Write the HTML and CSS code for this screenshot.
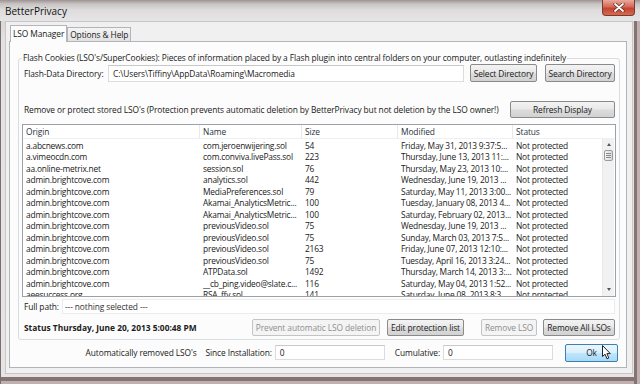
FILE: index.html
```html
<!DOCTYPE html>
<html lang="en">
<head>
  <meta charset="utf-8">
  <title>BetterPrivacy</title>
  <link rel="stylesheet" href="styles.css">
</head>
<body>
<div class="window">
  <div class="titlebar">
    <span class="title">BetterPrivacy</span>
    <div class="close-btn">
      <svg width="12" height="9" viewBox="0 0 12 9">
        <path d="M2 1 L10 8 M10 1 L2 8" stroke="#5a2a22" stroke-width="3.2" stroke-linecap="round"/>
        <path d="M2 1 L10 8 M10 1 L2 8" stroke="#ffffff" stroke-width="1.8" stroke-linecap="round"/>
      </svg>
    </div>
  </div>

  <div class="client">
    <div class="tabs">
      <div class="tab active">LSO Manager</div>
      <div class="tab">Options &amp; Help</div>
    </div>

    <div class="panel">
      <fieldset class="group">
        <legend>Flash Cookies (LSO's/SuperCookies): Pieces of information placed by a Flash plugin into central folders on your computer, outlasting indefinitely</legend>

        <div class="dir-row">
          <span class="label grow">Flash-Data Directory:</span>
          <div class="textbox dir-box">C:\Users\Tiffiny\AppData\Roaming\Macromedia</div>
          <button class="btn select-btn">Select Directory</button>
          <button class="btn search-btn">Search Directory</button>
        </div>

        <div class="info-row">
          <span class="label grow">Remove or protect stored LSO's (Protection prevents automatic deletion by BetterPrivacy but not deletion by the LSO owner!)</span>
          <button class="btn refresh-btn">Refresh Display</button>
        </div>

        <div class="listview">
          <div class="lv-header">
            <div class="hcell">Origin</div>
            <div class="hcell">Name</div>
            <div class="hcell">Size</div>
            <div class="hcell">Modified</div>
            <div class="hcell">Status</div>
          </div>
          <div class="lv-body">
            <div class="lv-rows">
              <div class="row"><span>a.abcnews.com</span><span>com.jeroenwijering.sol</span><span>54</span><span>Friday, May 31, 2013 9:37:5...</span><span>Not protected</span></div>
              <div class="row"><span>a.vimeocdn.com</span><span>com.conviva.livePass.sol</span><span>223</span><span>Thursday, June 13, 2013 11:...</span><span>Not protected</span></div>
              <div class="row"><span>aa.online-metrix.net</span><span>session.sol</span><span>76</span><span>Thursday, May 23, 2013 10:...</span><span>Not protected</span></div>
              <div class="row"><span>admin.brightcove.com</span><span>analytics.sol</span><span>442</span><span>Wednesday, June 19, 2013 ...</span><span>Not protected</span></div>
              <div class="row"><span>admin.brightcove.com</span><span>MediaPreferences.sol</span><span>79</span><span>Saturday, May 11, 2013 3:00...</span><span>Not protected</span></div>
              <div class="row"><span>admin.brightcove.com</span><span>Akamai_AnalyticsMetric...</span><span>100</span><span>Tuesday, January 08, 2013 4...</span><span>Not protected</span></div>
              <div class="row"><span>admin.brightcove.com</span><span>Akamai_AnalyticsMetric...</span><span>100</span><span>Saturday, February 02, 2013...</span><span>Not protected</span></div>
              <div class="row"><span>admin.brightcove.com</span><span>previousVideo.sol</span><span>75</span><span>Wednesday, June 19, 2013 ...</span><span>Not protected</span></div>
              <div class="row"><span>admin.brightcove.com</span><span>previousVideo.sol</span><span>75</span><span>Sunday, March 03, 2013 7:5...</span><span>Not protected</span></div>
              <div class="row"><span>admin.brightcove.com</span><span>previousVideo.sol</span><span>2163</span><span>Friday, June 07, 2013 12:10:...</span><span>Not protected</span></div>
              <div class="row"><span>admin.brightcove.com</span><span>previousVideo.sol</span><span>75</span><span>Tuesday, April 16, 2013 3:24...</span><span>Not protected</span></div>
              <div class="row"><span>admin.brightcove.com</span><span>ATPData.sol</span><span>1492</span><span>Thursday, March 14, 2013 3:...</span><span>Not protected</span></div>
              <div class="row"><span>admin.brightcove.com</span><span>__cb_ping.video@slate.c...</span><span>116</span><span>Saturday, May 04, 2013 1:52...</span><span>Not protected</span></div>
              <div class="row"><span>aeesuccess.org</span><span>RSA_ffy.sol</span><span>141</span><span>Saturday, June 08, 2013 8:3...</span><span>Not protected</span></div>
            </div>
            <div class="scrollbar">
              <div class="arrow up"></div>
              <div class="thumb"><i></i><i></i><i></i></div>
              <div class="track"></div>
              <div class="arrow down"></div>
            </div>
          </div>
        </div>

        <div class="path-row">
          <span class="label">Full path:</span>
          <div class="textbox path-box">--- nothing selected ---</div>
        </div>

        <div class="status-row">
          <span class="label grow status-text">Status Thursday, June 20, 2013 5:00:48 PM</span>
          <button class="btn prevent-btn" disabled>Prevent automatic LSO deletion</button>
          <button class="btn edit-btn">Edit protection list</button>
          <button class="btn remove-btn" disabled>Remove LSO</button>
          <button class="btn remove-all-btn">Remove All LSOs</button>
        </div>
      </fieldset>

      <div class="totals-row">
        <span class="label auto-label">Automatically removed LSO's</span>
        <span class="label">Since Installation:</span>
        <div class="textbox count-box">0</div>
        <span class="label cumul-label">Cumulative:</span>
        <div class="textbox count-box">0</div>
        <button class="btn ok-btn">Ok</button>
      </div>
    </div>
  </div>

  <svg class="cursor" width="10" height="15" viewBox="0 0 10 15">
    <path d="M0.5 0.5 L0.5 11.5 L3 9.2 L5 13.8 L6.8 13 L4.9 8.6 L8.3 8.6 Z" fill="#ffffff" stroke="#222" stroke-width="1" stroke-linejoin="round"/>
  </svg>
</div>
</body>
</html>
```

FILE: styles.css
```css
body {
  margin: 0;
  background: #b9a9a9;
  font-family: "Open Sans", "Noto Sans", sans-serif;
  font-size: 8.4px;
  letter-spacing: -0.1px;
  color: #202020;
}

.window {
  position: relative;
  width: 640px;
  height: 384px;
  background: linear-gradient(#d2cccc, #e3e1e1 40px, #e6e4e4);
  box-shadow: inset 1px 0 #7b6e6e, inset -3px 0 #c0b0b0, inset -6px 0 #857474,
              inset 0 -3px #c0b0b0, inset 0 -7px #857474;
  overflow: hidden;
}

.titlebar {
  height: 21px;
  display: flex;
  align-items: center;
  padding-left: 5px;
  background: linear-gradient(#9d9292 0, #c9c4c4 4px, #dedcdc 10px, #e6e5e5 21px);
}

.title {
  font-size: 10px;
  letter-spacing: 0;
  color: #111;
  flex: 1;
}

.close-btn {
  align-self: flex-start;
  width: 33px;
  height: 16px;
  margin-right: 5px;
  display: flex;
  align-items: center;
  justify-content: center;
  border: 1px solid #7a3a32;
  border-top: 0;
  border-radius: 0 0 4px 4px;
  background: linear-gradient(#e9a99c, #d4685a 45%, #c2442f 55%, #d86a52);
  box-sizing: border-box;
}

.client {
  margin: 0 7px 0 5px;
  height: 353px;
  background: #f0f0f0;
  border: 1px solid #c9c6c6;
  box-sizing: border-box;
  padding: 3px 5px 0 3px;
}

.tabs {
  display: flex;
  align-items: flex-end;
  padding-left: 1px;
  height: 16px;
  position: relative;
  z-index: 1;
}

.tab {
  height: 13px;
  line-height: 13px;
  padding: 0 2px;
  border: 1px solid #b2b4b9;
  border-bottom: 0;
  background: linear-gradient(#f4f4f4, #e2e2e2);
}

.tab.active {
  height: 16px;
  line-height: 15px;
  background: #fcfcfc;
  margin-bottom: -1px;
  padding: 0 2px;
}

.panel {
  height: 327px;
  box-sizing: border-box;
  background: #fcfcfc;
  border: 1px solid #b2b4b9;
  padding: 10px 8px 0 8px;
}

.group {
  margin: 0 -2px 0 0;
  padding: 0 3px 3px 3px;
  border: 1px solid #d6dde3;
  border-radius: 3px;
}

.group legend {
  padding: 0 1px;
  line-height: 12px;
}

.label {
  white-space: nowrap;
}

.grow {
  flex: 1;
  padding-left: 2px;
}

.textbox {
  height: 15px;
  line-height: 14px;
  box-sizing: border-box;
  background: #fff;
  border: 1px solid #dcdcdc;
  border-top-color: #c8c8c8;
  padding-left: 4px;
  white-space: nowrap;
  overflow: hidden;
}

.btn {
  font-family: inherit;
  font-size: inherit;
  letter-spacing: inherit;
  color: #1a1a1a;
  height: 17px;
  padding: 0;
  box-sizing: border-box;
  border: 1px solid #8a8a8a;
  border-radius: 2px;
  background: linear-gradient(#f3f3f3, #e9e9e9 48%, #dcdcdc 52%, #d2d2d2);
  white-space: nowrap;
}

.btn:disabled {
  color: #8f8f8f;
  border-color: #c4c4c4;
  background: #f4f4f4;
}

.dir-row {
  display: flex;
  align-items: center;
  height: 18px;
  padding-right: 1px;
}

.dir-box {
  width: 356px;
  height: 17px;
  line-height: 16px;
  margin-right: 6px;
}

.select-btn {
  width: 67px;
  height: 18px;
  margin-right: 8px;
}

.search-btn {
  width: 70px;
  height: 18px;
}

.info-row {
  display: flex;
  align-items: center;
  height: 17px;
  margin-top: 19px;
  padding-right: 1px;
}

.refresh-btn {
  width: 105px;
}

.listview {
  margin-top: 6px;
  height: 173px;
  box-sizing: border-box;
  border: 1px solid #9ea2a8;
  background: #fff;
  display: flex;
  flex-direction: column;
}

.lv-header,
.row {
  display: grid;
  grid-template-columns: 177px 102px 96px 115px 1fr;
}

.lv-header {
  height: 14px;
  line-height: 13px;
  border-bottom: 1px solid #eef0f3;
  box-sizing: border-box;
  color: #2a3240;
}

.hcell {
  padding-left: 3px;
  border-right: 1px solid #e6e8eb;
}

.hcell:last-child {
  border-right: 0;
}

.lv-body {
  flex: 1;
  display: flex;
  overflow: hidden;
}

.lv-rows {
  flex: 1;
  overflow: hidden;
  padding-top: 0.5px;
}

.row {
  height: 11.5px;
  line-height: 11.5px;
  white-space: nowrap;
  letter-spacing: -0.2px;
}

.row span {
  padding-left: 3px;
  overflow: hidden;
}

.scrollbar {
  width: 11px;
  margin-right: 1px;
  background: #f1f1f1;
  border-left: 1px solid #e8e8e8;
  display: flex;
  flex-direction: column;
  align-items: center;
}

.arrow {
  width: 0;
  height: 0;
  border-left: 2.5px solid transparent;
  border-right: 2.5px solid transparent;
}

.arrow.up {
  margin-top: 4px;
  border-bottom: 3px solid #555;
}

.arrow.down {
  margin-bottom: 5px;
  border-top: 3px solid #555;
}

.thumb {
  width: 9px;
  height: 11px;
  margin-top: 4px;
  box-sizing: border-box;
  border: 1px solid #9a9a9a;
  border-radius: 2px;
  background: linear-gradient(90deg, #f3f3f3, #dcdcdc);
  display: flex;
  flex-direction: column;
  justify-content: center;
  align-items: center;
  gap: 1px;
}

.thumb i {
  width: 5px;
  height: 1px;
  background: #8a8a8a;
}

.track {
  flex: 1;
}

.path-row {
  display: flex;
  align-items: center;
  margin-top: 2px;
  height: 15px;
  padding-left: 2px;
  padding-right: 1px;
}

.path-box {
  flex: 1;
  margin-left: 3px;
  padding-left: 2px;
  border-color: #ececec;
  color: #333;
}

.status-row {
  display: flex;
  align-items: center;
  height: 18px;
  margin-top: 4px;
  padding-right: 1px;
}

.status-text {
  font-weight: bold;
  letter-spacing: 0;
}

.prevent-btn {
  width: 128px;
  margin-right: 7px;
}

.edit-btn {
  width: 77px;
  margin-right: 17px;
}

.remove-btn {
  width: 56px;
  margin-right: 6px;
}

.remove-all-btn {
  width: 72px;
}

.totals-row {
  display: flex;
  align-items: center;
  justify-content: flex-end;
  height: 17px;
  margin-top: 4px;
}

.auto-label {
  margin-right: 9px;
}

.count-box {
  width: 110px;
  margin-left: 3px;
}

.cumul-label {
  margin-left: 10px;
}

.ok-btn {
  width: 53px;
  height: 18px;
  margin-left: 12px;
  border-color: #3c7fb1;
  background: linear-gradient(#eaf6fd, #d9f0fc 48%, #bee6fd 52%, #a7d9f5);
}

.cursor {
  position: absolute;
  left: 602px;
  top: 345px;
}
```
